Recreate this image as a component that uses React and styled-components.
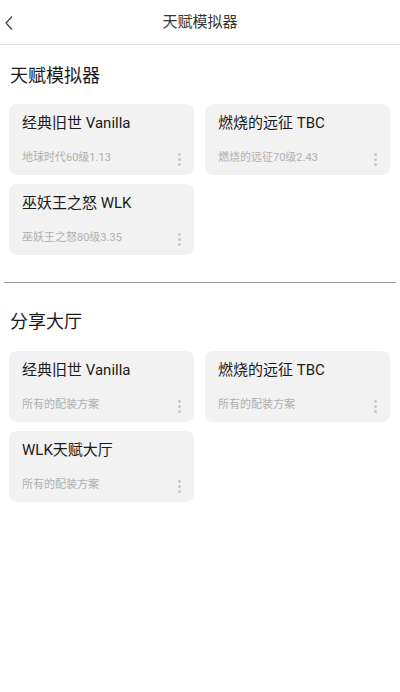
import React from "react";
import styled, { createGlobalStyle } from "styled-components";

const Global = createGlobalStyle`
  html, body { margin: 0; padding: 0; background: #fff; }
  body { font-family: Roboto, "Noto Sans CJK SC", "Noto Sans", sans-serif; color: #222; }
`;

const Page = styled.div`
  width: 400px;
  min-height: 692px;
  background: #fff;
`;

const Header = styled.header`
  position: relative;
  height: 44px;
  border-bottom: 1px solid #e6e6e6;
  display: flex;
  align-items: center;
  justify-content: center;
`;

const BackButton = styled.button`
  position: absolute;
  left: 0;
  top: 13px;
  width: 18px;
  height: 20px;
  padding: 0;
  border: 0;
  background: transparent;
  display: flex;
  align-items: center;
  justify-content: center;
`;

const HeaderTitle = styled.div`
  font-size: 15px;
  color: #333;
  line-height: 20px;
`;

const Section = styled.section`
  padding: ${(p) => p.$top}px 10px 0 9px;
`;

const SectionTitle = styled.h2`
  margin: 0 0 ${(p) => p.$gap}px 1px;
  font-size: 18px;
  font-weight: 400;
  line-height: 24px;
  color: #1a1a1a;
`;

const Grid = styled.div`
  display: grid;
  grid-template-columns: 1fr 1fr;
  column-gap: 11px;
  row-gap: 9px;
`;

const Card = styled.div`
  position: relative;
  height: 71px;
  box-sizing: border-box;
  background: #f2f2f2;
  border-radius: 8px;
  padding: 9px 13px 0 13px;
  display: flex;
  flex-direction: column;
`;

const CardTitle = styled.div`
  font-size: 15px;
  line-height: 20px;
  color: #1a1a1a;
`;

const CardSub = styled.div`
  margin-top: 17px;
  font-size: 11px;
  line-height: 16px;
  color: #b0b0b0;
`;

const Dots = styled.div`
  position: absolute;
  right: 13px;
  bottom: 9px;
  display: flex;
  flex-direction: column;
  gap: 2px;
`;

const Dot = styled.span`
  width: 3px;
  height: 3px;
  border-radius: 50%;
  background: #c8c8c8;
`;

const Divider = styled.hr`
  margin: 27px 4px 0 4px;
  border: 0;
  border-top: 1px solid #9a9a9a;
  height: 0;
`;

const sim = [
  { t: "经典旧世 Vanilla", s: "地球时代60级1.13" },
  { t: "燃烧的远征 TBC", s: "燃烧的远征70级2.43" },
  { t: "巫妖王之怒 WLK", s: "巫妖王之怒80级3.35" },
];

const share = [
  { t: "经典旧世 Vanilla", s: "所有的配装方案" },
  { t: "燃烧的远征 TBC", s: "所有的配装方案" },
  { t: "WLK天赋大厅", s: "所有的配装方案" },
];

function Item({ t, s }) {
  return (
    <Card>
      <CardTitle>{t}</CardTitle>
      <CardSub>{s}</CardSub>
      <Dots>
        <Dot />
        <Dot />
        <Dot />
      </Dots>
    </Card>
  );
}

export default function App() {
  return (
    <Page>
      <Global />
      <Header>
        <BackButton aria-label="back">
          <svg width="12" height="16" viewBox="0 0 12 16">
            <path d="M9 1.5 L3 8 L9 14.5" fill="none" stroke="#444" strokeWidth="1.3" />
          </svg>
        </BackButton>
        <HeaderTitle>天赋模拟器</HeaderTitle>
      </Header>
      <Section $top={19}>
        <SectionTitle $gap={16}>天赋模拟器</SectionTitle>
        <Grid>
          {sim.map((c) => (
            <Item key={c.t} {...c} />
          ))}
        </Grid>
      </Section>
      <Divider />
      <Section $top={27}>
        <SectionTitle $gap={17}>分享大厅</SectionTitle>
        <Grid>
          {share.map((c) => (
            <Item key={c.t} {...c} />
          ))}
        </Grid>
      </Section>
    </Page>
  );
}
